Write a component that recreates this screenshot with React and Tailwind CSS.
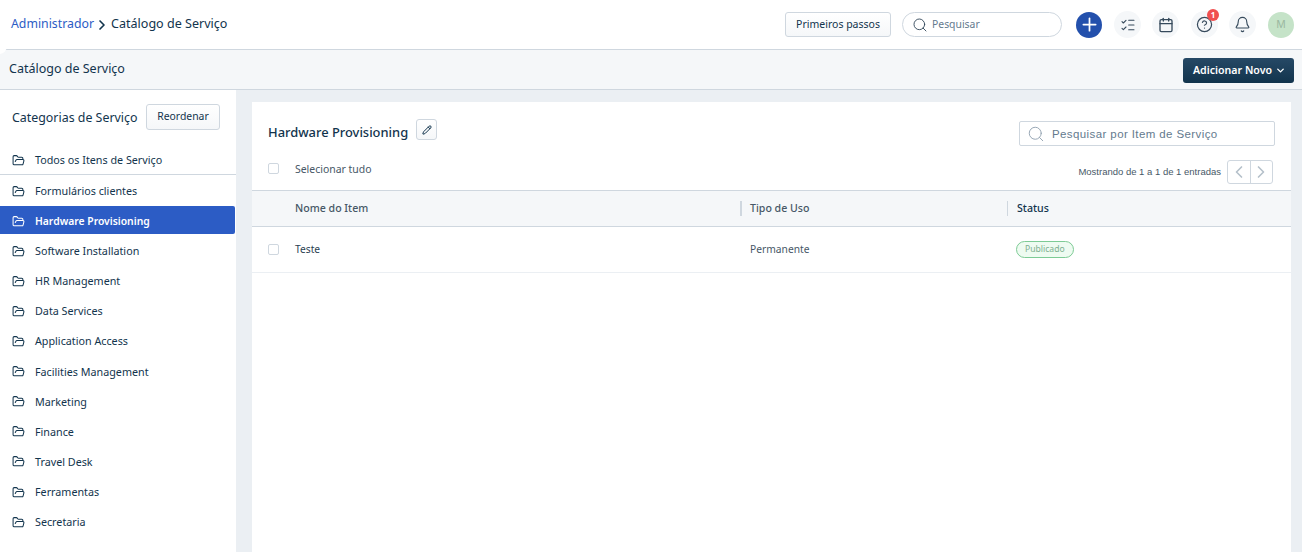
import { Search, Plus, ListChecks, Calendar, CircleHelp, Bell, ChevronDown, ChevronRight, ChevronLeft, FolderOpen, Pencil } from "lucide-react";

const categories = [
  "Formulários clientes",
  "Hardware Provisioning",
  "Software Installation",
  "HR Management",
  "Data Services",
  "Application Access",
  "Facilities Management",
  "Marketing",
  "Finance",
  "Travel Desk",
  "Ferramentas",
  "Secretaria",
];

const Checkbox = () => (
  <span className="block w-[11px] h-[11px] border border-[#cfd7df] rounded-[2px] bg-white" />
);

const IconCircle = ({ children, className = "" }) => (
  <div className={`relative w-[27px] h-[27px] rounded-full bg-[#f5f7f9] flex items-center justify-center text-[#364a5c] ${className}`}>
    {children}
  </div>
);

const Sidebar = () => (
  <aside className="w-[236px] shrink-0 bg-white">
    <div className="flex items-start h-[56px] pl-3 pt-[14px]">
      <h2 className="w-[126px] h-[28px] flex items-center whitespace-nowrap text-[12.4px] text-[#12344d]">Categorias de Serviço</h2>
      <button className="ml-2 w-[74px] h-[26px] text-[10.4px] text-[#12344d] border border-[#cfd7df] rounded-[3px] bg-gradient-to-b from-white to-[#f5f7f9]">
        Reordenar
      </button>
    </div>
    <div className="flex items-center h-[29px] pl-3 gap-[10px] border-b border-[#cfd7df] text-[10.75px] text-[#12344d]">
      <FolderOpen size={13} strokeWidth={1.9} />
      <span>Todos os Itens de Serviço</span>
    </div>
    <ul className="mt-[1px]">
      {categories.map((name) => {
        const active = name === "Hardware Provisioning";
        return (
          <li key={name} className="h-[30.12px] pr-[1px]">
            <div
              className={
                active
                  ? "flex items-center w-full h-[28px] pt-[3px] pl-3 gap-[10px] text-[10.35px] font-semibold bg-[#2c5cc5] text-white rounded-r-[2px]"
                  : "flex items-center w-full h-[28px] pt-[2px] pl-3 gap-[10px] text-[10.75px] text-[#12344d]"
              }
            >
              <FolderOpen size={13} strokeWidth={1.9} />
              <span>{name}</span>
            </div>
          </li>
        );
      })}
    </ul>
  </aside>
);

const App = () => {
  return (
    <div
      className="relative h-[552px] w-[1302px] overflow-hidden flex flex-col bg-[#ebeff3]"
      style={{ fontFamily: '"Noto Sans", sans-serif' }}
    >
      <span className="absolute z-10 left-[-9px] top-[38px] w-[16px] h-[16px] rounded-full bg-white flex items-center justify-end pr-[7px]">
        <span className="w-[2px] h-[2px] bg-[#12344d]" />
      </span>
      <header className="h-[50px] shrink-0 bg-white border-b border-[#cfd7df] flex items-center pl-[11px] pr-[8px]">
        <div className="flex items-center text-[#12344d]">
          <span className="text-[12.3px] text-[#2c5cc5]">Administrador</span>
          <ChevronRight size={16} strokeWidth={2.5} className="mr-[1px]" />
          <span className="text-[12.55px]">Catálogo de Serviço</span>
        </div>
        <div className="ml-auto flex items-center">
          <button className="w-[106px] h-[25px] text-[10.5px] text-[#12344d] border border-[#cfd7df] rounded-[3px] bg-gradient-to-b from-white to-[#f5f7f9]">
            Primeiros passos
          </button>
          <div className="ml-[11px] w-[160px] h-[25px] flex items-center pl-[9px] gap-[4px] border border-[#cfd7df] rounded-full bg-white text-[10.4px]">
            <Search size={16} strokeWidth={1.4} className="text-[#364a5c]" />
            <span className="text-[#647a8e]">Pesquisar</span>
          </div>
          <div className="ml-[14px] w-[26px] h-[26px] rounded-full bg-[#2350ac] flex items-center justify-center text-white">
            <Plus size={21} strokeWidth={2} />
          </div>
          <div className="ml-[12px] flex items-center gap-[11px]">
            <IconCircle>
              <ListChecks size={16} strokeWidth={1.6} />
            </IconCircle>
            <IconCircle>
              <Calendar size={16} strokeWidth={2} />
            </IconCircle>
            <IconCircle className="ml-[1px]">
              <CircleHelp size={17} strokeWidth={1.7} />
              <span className="absolute top-[-2px] right-[-1px] w-[12px] h-[12px] rounded-full bg-[#f04f4f] text-white text-[8px] font-bold flex items-center justify-center">
                1
              </span>
            </IconCircle>
            <IconCircle>
              <Bell size={17} strokeWidth={1.6} />
            </IconCircle>
            <div className="ml-[1px] w-[26px] h-[26px] rounded-full bg-[#c5e3c8] flex items-center justify-center text-[10.5px] text-[#9ab8a0]">
              M
            </div>
          </div>
        </div>
      </header>

      <div className="h-[40px] shrink-0 bg-[#f5f7f9] border-b border-[#cfd7df] flex items-center pl-[9px] pr-[8px]">
        <h1 className="text-[12.5px] text-[#12344d]">Catálogo de Serviço</h1>
        <button className="ml-auto mt-[2px] w-[111px] h-[25px] pl-[10px] rounded-[3px] bg-gradient-to-b from-[#264966] to-[#12344d] text-white text-[10.6px] font-semibold flex items-center gap-[3px]">
          Adicionar Novo
          <ChevronDown size={11} strokeWidth={3} />
        </button>
      </div>

      <div className="flex flex-1 min-h-0">
        <Sidebar />
        <main className="ml-[16px] mt-[12px] w-[1039px] bg-white">
          <div className="flex items-start justify-between px-[16px] pt-[17px] h-[56px]">
            <div className="flex items-start gap-[8px]">
              <h2 className="h-[27px] flex items-center text-[12.9px] font-medium text-[#12344d]">Hardware Provisioning</h2>
              <button className="w-[21px] h-[21px] border border-[#cfd7df] rounded-[3px] bg-gradient-to-b from-white to-[#f5f7f9] flex items-center justify-center text-[#12344d]">
                <Pencil size={10} strokeWidth={2.4} />
              </button>
            </div>
            <div className="w-[256px] h-[25px] mt-[2px] border border-[#cfd7df] rounded-[2px] flex items-center pl-[7px] gap-[7px]">
              <Search size={18} strokeWidth={1.25} className="text-[#92a2b1]" />
              <span className="pt-[2px] text-[11.5px] tracking-[0.4px] text-[#647a8e]" style={{ fontFamily: '"Liberation Sans", sans-serif' }}>
                Pesquisar por Item de Serviço
              </span>
            </div>
          </div>
          <div className="h-[32px] flex items-start pl-[16px] pr-[18px] justify-between">
            <div className="h-[20px] flex items-center gap-[16px] text-[10.45px] text-[#475867]">
              <Checkbox />
              <span className="pt-[3px]">Selecionar tudo</span>
            </div>
            <div className="mt-[2px] flex items-center gap-[6px]">
              <span className="text-[9.5px] text-[#475867]" style={{ fontFamily: '"Liberation Sans", sans-serif' }}>
                Mostrando de 1 a 1 de 1 entradas
              </span>
              <div className="flex w-[46px] h-[24px] border border-[#cfd7df] rounded-[3px] text-[#b5c0ca] divide-x divide-[#cfd7df]">
                <span className="flex-1 flex items-center justify-center">
                  <ChevronLeft size={20} strokeWidth={2} />
                </span>
                <span className="flex-1 flex items-center justify-center">
                  <ChevronRight size={20} strokeWidth={2} />
                </span>
              </div>
            </div>
          </div>
          <div className="h-[37px] bg-[#f5f7f9] border-y border-[#cfd7df] flex items-center text-[10.6px] text-[#475867]">
            <span className="w-[488px] pl-[43px] font-medium">Nome do Item</span>
            <span className="w-[267px] pl-[8px] border-l-2 border-[#cfd7df] font-medium">Tipo de Uso</span>
            <span className="pl-[9px] border-l border-[#cfd7df] text-[#12344d] font-medium">Status</span>
          </div>
          <div className="h-[46px] border-b border-[#ebeff3] flex items-center text-[10.25px] text-[#475867]">
            <div className="w-[43px] pl-[16px]">
              <Checkbox />
            </div>
            <span className="w-[455px] text-[#2b3f52]">Teste</span>
            <span className="w-[266px]">Permanente</span>
            <span className="px-[8px] h-[17px] rounded-full border border-[#7dcb95] bg-[#eefbf1] text-[8.6px] text-[#7db08f] flex items-center">
              Publicado
            </span>
          </div>
        </main>
      </div>
    </div>
  );
};

export default App;
